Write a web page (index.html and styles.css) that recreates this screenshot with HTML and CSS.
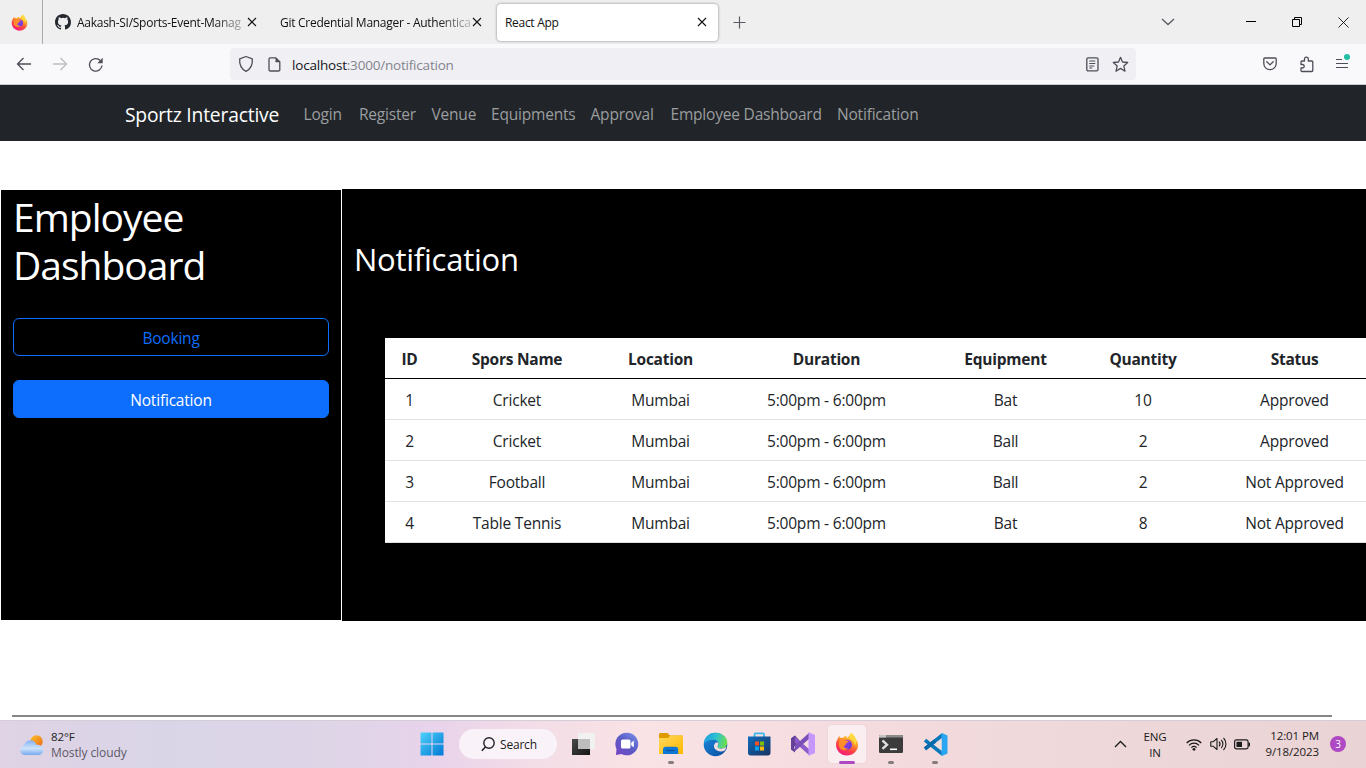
FILE: index.html
```html
<!DOCTYPE html>
<html lang="en">
<head>
<meta charset="utf-8">
<title>React App</title>
<link rel="stylesheet" href="styles.css">
</head>
<body>
<svg class="defs" width="0" height="0">
  <defs>
    <linearGradient id="ffA" x1="0.8" y1="0" x2="0.3" y2="1"><stop offset="0" stop-color="#fff44f"/><stop offset=".35" stop-color="#ffa628"/><stop offset=".65" stop-color="#ff4a3d"/><stop offset="1" stop-color="#f5157f"/></linearGradient>
    <linearGradient id="ffB" x1="0" y1="0" x2="1" y2="1"><stop offset="0" stop-color="#b33bd8"/><stop offset="1" stop-color="#5a3de0"/></linearGradient>
    <linearGradient id="win" x1="0" y1="0" x2="1" y2="1"><stop offset="0" stop-color="#4fd0fb"/><stop offset="1" stop-color="#0078d4"/></linearGradient>
    <linearGradient id="dark" x1="0" y1="0" x2="1" y2="1"><stop offset="0" stop-color="#4a4a4a"/><stop offset="1" stop-color="#151515"/></linearGradient>
    <linearGradient id="chat" x1="1" y1="0" x2="0.2" y2="1"><stop offset="0" stop-color="#7f94ee"/><stop offset=".5" stop-color="#5b5fc7"/><stop offset="1" stop-color="#7047c4"/></linearGradient>
    <linearGradient id="fold" x1="0" y1="0" x2="1" y2="1"><stop offset="0" stop-color="#ffd75e"/><stop offset="1" stop-color="#ffb900"/></linearGradient>
    <linearGradient id="edgeA" x1="0" y1="0.3" x2="1" y2="0.5"><stop offset="0" stop-color="#1b9de2"/><stop offset=".5" stop-color="#2fc2cf"/><stop offset="1" stop-color="#6be04c"/></linearGradient>
    <linearGradient id="edgeB" x1="0" y1="0" x2="1" y2="1"><stop offset="0" stop-color="#1b8de0"/><stop offset="1" stop-color="#0c4a9c"/></linearGradient>
    <linearGradient id="store" x1="0" y1="0" x2="1" y2="1"><stop offset="0" stop-color="#0f6cbd"/><stop offset="1" stop-color="#1b3360"/></linearGradient>
    <linearGradient id="sun" x1="0" y1="0" x2="1" y2="1"><stop offset="0" stop-color="#fbc02d"/><stop offset="1" stop-color="#ee6a14"/></linearGradient>
    <linearGradient id="cloud" x1="0" y1="0" x2="0" y2="1"><stop offset="0" stop-color="#82b1f3"/><stop offset=".55" stop-color="#cfe3fb"/><stop offset="1" stop-color="#76a9ef"/></linearGradient>
    <symbol id="firefox" viewBox="0 0 24 24">
      <path fill="url(#ffA)" d="M16 .8c2.100 1.500 3.200 3.200 3.700 5.300C22.200 8.300 23.300 11 23 14c-.5 5.300-5.200 9.500-11 9.500C6 23.500 1 19 1 12.800c0-2.500.8-4.600 2-6.300.1-.9.600-1.900 1.400-2.500l.6 2c1-.3 2.200-.3 3.200.1C9 4.800 10.200 4 11.500 3.600c-.2 1 0 2 .5 2.700 1.300-1.500 3-2.900 4-5.500z"/>
      <circle cx="12" cy="12.700" r="5" fill="url(#ffB)"/>
      <path fill="#ff8d2a" d="M4.500 8.500c2-2 4.300-1.700 6.300-.3 1 .7 2.200.6 3 .9-.2 1.500-2.300 1.700-2.700 2.300-.3 1.700-1.700 1.600-2.100 2.900-.3 2 2.600 2.500 4 1.800-1.700 3.200-7.100 3-8.600-.8-.8-2.200-.7-4.700.1-6.800z"/>
      <path fill="#ffd93f" d="M16 1c5 3.500 6.500 8 4.200 12.500-1-3.500-2.100-5.400-5.400-6.700C14.300 4.700 15.400 3.200 16 1z"/>
    </symbol>
    <symbol id="close" viewBox="0 0 10 10"><path d="M1 1l8 8M9 1l-8 8" stroke="currentColor" stroke-width="1.100" fill="none"/></symbol>
  </defs>
</svg>

<header class="tabs">
  <div class="pinned"><svg width="17" height="17"><use href="#firefox"/></svg></div>
  <div class="tab tab-github">
    <svg class="github" width="16" height="16" viewBox="0 0 16 16" fill="#24292f"><path d="M8 0C3.580 0 0 3.580 0 8c0 3.540 2.290 6.530 5.470 7.590.4.070.55-.17.55-.38v-1.490c-2.010.37-2.530-.49-2.690-.94-.09-.23-.48-.94-.82-1.130-.28-.15-.68-.52-.01-.53.63-.01 1.080.58 1.230.82.72 1.210 1.870.87 2.330.66.07-.52.28-.87.51-1.070-1.780-.2-3.640-.89-3.640-3.950 0-.87.31-1.590.82-2.150-.08-.2-.36-1.020.08-2.120 0 0 .67-.21 2.200.82a7.420 7.420 0 014 0c1.530-1.040 2.200-.82 2.200-.82.44 1.100.16 1.920.08 2.120.51.560.82 1.270.82 2.150 0 3.070-1.870 3.750-3.650 3.950.29.250.54.730.54 1.480v2.200c0 .21.150.46.550.38A8.010 8.010 0 0016 8c0-4.420-3.580-8-8-8z"/></svg>
    <span class="tab-title fade t1">Aakash-SI/Sports-Event-Manag</span>
    <svg width="10" height="10"><use href="#close"/></svg>
  </div>
  <div class="tab tab-git">
    <span class="tab-title fade t2">Git Credential Manager - Authentica</span>
    <svg width="10" height="10"><use href="#close"/></svg>
  </div>
  <div class="tab tab-active">
    <span class="tab-title t3">React App</span>
    <svg width="10" height="10"><use href="#close"/></svg>
  </div>
  <svg class="plus" width="13" height="13" viewBox="0 0 13 13"><path d="M6.500 .5v12M.5 6.500h12" stroke="#5b5b66" stroke-width="1.200"/></svg>
  <svg class="chev" width="14" height="8" viewBox="0 0 14 8"><path d="M1 1l6 5.500L13 1" stroke="#5b5b66" stroke-width="1.300" fill="none"/></svg>
  <svg class="wmin" width="10" height="10" viewBox="0 0 10 10"><path d="M0 4.500h10" stroke="#000"/></svg>
  <svg class="wmax" width="10" height="10" viewBox="0 0 10 10"><path d="M.5 2.500h7v7h-7zM2.500 2.500v-2h7v7h-2" stroke="#000" fill="none"/></svg>
  <svg class="wclose" width="11" height="11" viewBox="0 0 11 11"><path d="M.5 .5l10 10M10.500 .5l-10 10" stroke="#111" stroke-width=".9"/></svg>
</header>

<div class="toolbar">
  <svg class="back" width="16" height="14" viewBox="0 0 16 14"><path d="M7.500 1L1.500 7l6 6M1.500 7H15" stroke="#4d4d58" stroke-width="1.300" fill="none"/></svg>
  <svg class="fwd" width="16" height="14" viewBox="0 0 16 14"><path d="M8.500 1l6 6-6 6M14.500 7H1" stroke="#bdbdc3" stroke-width="1.300" fill="none"/></svg>
  <svg class="reload" width="16" height="16" viewBox="0 0 16 16"><path d="M14 8.500A6.300 6.300 0 1 1 12.300 3.500" stroke="#4d4d58" stroke-width="1.300" fill="none"/><path d="M14.700 .8v5.400H9.300z" fill="#4d4d58"/></svg>
  <div class="urlbar">
    <svg width="16" height="18" viewBox="0 0 16 18"><path d="M8 1.500l6.300 2.300c.5 6-1.400 10.200-6.300 12.500C3.100 14 1.200 9.800 1.700 3.800z" stroke="#4d4d58" stroke-width="1.300" stroke-linejoin="round" fill="none"/></svg>
    <svg class="page" width="13" height="15" viewBox="0 0 13 15"><path d="M2.200.8h5.600l4 4v7.900a1.200 1.200 0 0 1-1.200 1.300H2.200A1.200 1.200 0 0 1 1 12.700V2A1.200 1.200 0 0 1 2.200.8z" stroke="#4d4d58" stroke-width="1.300" fill="none"/><path d="M7.500.8v4.400H12z" fill="#4d4d58"/></svg>
    <span class="url"><b>localhost</b>:3000/notification</span>
    <svg class="reader" width="13" height="15" viewBox="0 0 13 15"><rect x=".8" y=".8" width="11.200" height="13" rx="1.300" stroke="#4d4d58" stroke-width="1.300" fill="none"/><path d="M3.300 4h6M3.300 6.500h6M3.300 9h5M3.300 11h3" stroke="#4d4d58"/></svg>
    <svg class="star" width="17" height="17" viewBox="0 0 17 17"><path d="M8.500 1.300l2 4.700 5.200.5-3.900 3.400 1.200 5.300-4.500-2.800L4 15.200l1.200-5.300-3.900-3.400L6.500 6z" stroke="#4d4d58" stroke-width="1.300" stroke-linejoin="round" fill="none"/></svg>
  </div>
  <svg class="pocket" width="14" height="14" viewBox="0 0 14 14"><path d="M1.800 1h10.400a1 1 0 0 1 1 1v4.500a6.200 6.200 0 0 1-12.400 0V2a1 1 0 0 1 1-1zM3.800 4.800L7 7.900l3.200-3.100" stroke="#4d4d58" stroke-width="1.300" stroke-linecap="round" stroke-linejoin="round" fill="none"/></svg>
  <svg class="ext" width="15" height="17" viewBox="0 0 15 17"><path d="M5.500 5V3a1.900 1.900 0 0 1 3.800 0v2h3.500c.6 0 1 .4 1 1v8.500c0 .6-.4 1-1 1H3c-.6 0-1-.4-1-1V12h1.500a1.700 1.700 0 0 0 0-3.500H2V5.900c0-.5.400-.9.900-.9z" stroke="#4d4d58" stroke-width="1.300" stroke-linejoin="round" fill="none"/></svg>
  <svg class="menu" width="15" height="17" viewBox="0 0 15 17"><path d="M1 6.500h6M1 10.500h12M1 14.500h12" stroke="#4d4d58" stroke-width="1.200"/><circle cx="12" cy="4" r="3" fill="#20bfa2"/></svg>
</div>

<nav class="navbar">
  <a class="brand">Sportz Interactive</a>
  <div class="links"><a>Login</a><a>Register</a><a>Venue</a><a>Equipments</a><a>Approval</a><a>Employee Dashboard</a><a>Notification</a></div>
</nav>

<main class="content">
  <aside class="sidebar">
    <h1>Employee<br>Dashboard</h1>
    <button class="btn outline">Booking</button>
    <button class="btn solid">Notification</button>
  </aside>
  <section class="panel">
    <h2>Notification</h2>
    <table>
      <colgroup><col class="c1"><col class="c2"><col class="c3"><col class="c4"><col class="c5"><col class="c6"><col class="c7"></colgroup>
      <thead><tr><th>ID</th><th>Spors Name</th><th>Location</th><th>Duration</th><th>Equipment</th><th>Quantity</th><th>Status</th></tr></thead>
      <tbody>
        <tr><td>1</td><td>Cricket</td><td>Mumbai</td><td class="time">5:00pm - 6:00pm</td><td>Bat</td><td>10</td><td>Approved</td></tr>
        <tr><td>2</td><td>Cricket</td><td>Mumbai</td><td class="time">5:00pm - 6:00pm</td><td>Ball</td><td>2</td><td>Approved</td></tr>
        <tr><td>3</td><td>Football</td><td>Mumbai</td><td class="time">5:00pm - 6:00pm</td><td>Ball</td><td>2</td><td>Not Approved</td></tr>
        <tr><td>4</td><td>Table Tennis</td><td>Mumbai</td><td class="time">5:00pm - 6:00pm</td><td>Bat</td><td>8</td><td>Not Approved</td></tr>
      </tbody>
    </table>
  </section>
</main>
<div class="rule-wrap"><div class="rule"></div></div>

<footer class="taskbar">
  <div class="weather">
    <svg width="26" height="22" viewBox="0 0 26 22"><circle cx="17.500" cy="7.500" r="6.200" fill="url(#sun)"/><path fill="url(#cloud)" d="M5.500 21a5 5 0 0 1-.3-9.800C6.200 8.200 8.600 6.300 11.400 6.300c3 0 5.300 1.800 6.200 4.600 3.800-.5 6.600 1.900 6.600 5 0 2.900-2.200 5.100-5.100 5.100z"/></svg>
    <div class="wtext"><span class="temp">82°F</span><span class="sky">Mostly cloudy</span></div>
  </div>
  <div class="apps">
    <div class="app start"><svg width="24" height="24" viewBox="0 0 24 24"><path fill="url(#win)" d="M.5.5h11v11H.5zM12.500.5h11v11h-11zM.5 12.500h11v11H.5zM12.500 12.500h11v11h-11z"/></svg></div>
    <div class="search"><svg width="14" height="15" viewBox="0 0 14 15"><circle cx="8" cy="6" r="5.200" stroke="#222" stroke-width="1.400" fill="none"/><path d="M4.500 10L.8 13.800" stroke="#222" stroke-width="1.600"/></svg><span>Search</span></div>
    <div class="app"><svg width="24" height="24" viewBox="0 0 24 24"><path fill="url(#dark)" d="M1 7h18v16H1z"/><path fill="#f1f1f1" d="M7 1h18v16H7z"/><path fill="#bdbdbd" d="M7 7h12v10H7z"/></svg></div>
    <div class="app"><svg width="24" height="24" viewBox="0 0 24 24"><path fill="url(#chat)" d="M12 .7a11.300 11.300 0 1 1-5.500 21.200L1 23l.5-6A11.300 11.300 0 0 1 12 .7z"/><rect x="6" y="7.500" width="9.500" height="9" rx="1.500" fill="#fff"/><path fill="#fff" d="M16.200 10.800l2.600-2.300v7l-2.600-2.300z"/></svg></div>
    <div class="app"><svg width="26" height="24" viewBox="0 0 26 24"><path fill="#e09b00" d="M1 2.500C1 1.700 1.600 1 2.500 1h7L12 3.500h12.500V12H1z"/><path fill="url(#fold)" d="M1 6h9l2.500-2.500H25v18.500H1z"/><path fill="#0f78d4" d="M5 22v-4.500c0-1.800 1-2.700 2.700-2.700h9.800c1.700 0 2.700.9 2.700 2.700V22z"/><path d="M8.500 18.500h8" stroke="#0a529a" stroke-width="1.200"/></svg><i class="dot"></i></div>
    <div class="app"><svg width="25" height="25" viewBox="0 0 24 24"><circle cx="12" cy="12" r="11.300" fill="url(#edgeB)"/><path fill="url(#edgeA)" d="M.8 11C1.500 5 6 .7 12 .7c6.500 0 11.300 4.300 11.300 9.300 0 3.700-3 5.800-6 5.800-2 0-3.500-.7-3.500-1.700 0-.6 1.100-1 1.100-2.600 0-2.100-2-4-5-4C5.800 7.500 2.500 9.500.8 11z"/><path fill="#f4dde0" d="M14.500 10c.7 1.800-.5 3-.6 4 0 1.100 1.800 2.300 4.200 1.900 2-.3 3.600-1.200 4.500-2.300-.4 1.400-.8 2.700-1.500 3.900-2.700 1.700-6.600 1.500-9-.7-2.200-2-2-5.300.3-6.800z"/></svg></div>
    <div class="app"><svg width="24" height="24" viewBox="0 0 24 24"><path d="M7.500 5V2.400c0-.6.4-1 1-1h7.500c.6 0 1 .4 1 1V5" stroke="#38b6ed" stroke-width="1.800" fill="none"/><path fill="url(#store)" d="M1 4.500h22.500V21c0 1.500-1 2.500-2.500 2.500H3.500C2 23.500 1 22.500 1 21z"/><path fill="#f35325" d="M8 9.500h4v4H8z"/><path fill="#81bc06" d="M13 9.500h4v4h-4z"/><path fill="#05a6f0" d="M8 14.500h4v4H8z"/><path fill="#ffba08" d="M13 14.500h4v4h-4z"/></svg></div>
    <div class="app"><svg width="26" height="26" viewBox="0 0 26 26"><path fill="#644098" d="M1 7.500l4-3 5 5.500-6 6V20l-3-2z"/><path fill="#8d5bca" d="M4 5l15.500 13.500v6L5 11.500z"/><path fill="#7a4fb8" d="M4 21l15.500-13.500v-6L5 14.500z"/><path fill="#644098" d="M1 7.500l4-3v2.800L3.800 9v8L5 18.700v2.800l-4-3z"/><path fill="#c596fb" d="M18.500 1.300L25 4v18l-6.500 2.700z"/></svg></div>
    <div class="app current"><svg width="24" height="24"><use href="#firefox"/></svg><i class="dot active"></i></div>
    <div class="app"><svg width="24" height="20" viewBox="0 0 24 20"><rect y="1" width="24" height="18" rx="1.200" fill="#3b3b3b"/><path fill="#8a8a8a" d="M0 3.500V2a1 1 0 0 1 1-1h22a1 1 0 0 1 1 1v1.500z"/><path fill="#c4c4c4" d="M0 3.500V2a1 1 0 0 1 1-1h6v2.500z"/><path d="M3.500 6.500L8 10.700l-4.500 4.200" stroke="#ddd" stroke-width="2.400" fill="none"/><path d="M11 15.300h7" stroke="#fff" stroke-width="1.600"/></svg><i class="dot"></i></div>
    <div class="app"><svg width="25" height="25" viewBox="0 0 25 25"><path d="M2 8.200L19.500 22M2 16.800L19.500 3" stroke="#0877b9" stroke-width="3.600"/><path d="M2 16.800L12 9" stroke="#0669a8" stroke-width="3.600"/><path fill="#2aa6f2" d="M18.500.8L24.500 3.500v18l-6 2.700z"/><path fill="#f0dddd" d="M18.500 7.500v10L12 12.500z"/></svg><i class="dot"></i></div>
  </div>
  <div class="tray">
    <svg class="up" width="13" height="8" viewBox="0 0 13 8"><path d="M1 7l5.500-5.500L12 7" stroke="#1b1b1b" stroke-width="1.300" fill="none"/></svg>
    <div class="lang"><span>ENG</span><span>IN</span></div>
    <svg class="wifi" width="16" height="13" viewBox="0 0 16 13"><g stroke="#1b1b1b" stroke-width="1.200" fill="none"><path d="M.7 5A10.300 10.300 0 0 1 15.300 5M3 7.300a7 7 0 0 1 10 0M5.300 9.600a3.900 3.900 0 0 1 5.400 0"/></g><circle cx="8" cy="11.300" r="1.400" fill="#1b1b1b"/></svg>
    <svg class="vol" width="17" height="14" viewBox="0 0 17 14"><g stroke="#1b1b1b" stroke-width="1.100" fill="none" stroke-linejoin="round"><path d="M.8 4.700h2.500L7 1.500v11L3.300 9.300H.8zM9 4.700a3.300 3.300 0 0 1 0 4.600M11.200 2.900a5.800 5.800 0 0 1 0 8.200M13.500 1a8.500 8.500 0 0 1 0 12"/></g></svg>
    <svg class="batt" width="17" height="11" viewBox="0 0 17 11"><rect x=".6" y=".9" width="13.500" height="9" rx="1.800" stroke="#1b1b1b" stroke-width="1.200" fill="none"/><path fill="#1b1b1b" d="M2.500 2.800H8V8H2.500zM14.500 3.700H16v3.500h-1.500z"/></svg>
    <div class="clock"><span class="hour">12:01 PM</span><span class="date">9/18/2023</span></div>
    <div class="badge">3</div>
  </div>
</footer>
</body>
</html>
```
FILE: styles.css
```css
* { box-sizing: border-box; }
body { margin: 0; width: 1366px; height: 768px; overflow: hidden; background: #fff; display: flex; flex-direction: column; font-family: "Open Sans", "Noto Sans", sans-serif; font-size: 15.500px; letter-spacing: -.2px; color: #212529; }
svg { display: block; flex: none; }
.defs { position: absolute; }

.tabs { flex: none; height: 44px; background: #efefef; display: flex; align-items: center; color: #111; font-size: 12px; white-space: nowrap; }
.pinned { width: 43px; height: 44px; border-right: 1px solid #acacac; padding: 14px 0 0 11px; flex: none; }
.tab { display: flex; align-items: center; justify-content: space-between; flex: none; }
.tab-github { width: 214px; padding-left: 12px; }
.tab-git { width: 225px; padding-left: 23px; }
.tab-active { margin-left: 15px; width: 221px; height: 37px; background: #fff; border-radius: 4px; box-shadow: 0 0 3px rgba(0,0,0,.45); padding: 0 11px 0 8px; }
.tab-title { line-height: 18px; overflow: hidden; padding-top: 1px; }
.t1 { width: 167px; letter-spacing: -.27px; }
.t2 { width: 191px; letter-spacing: -.27px; }
.t3 { letter-spacing: -.3px; }
.fade { -webkit-mask-image: linear-gradient(90deg, #000 82%, transparent 105%); mask-image: linear-gradient(90deg, #000 82%, transparent 105%); }
.tab-github .tab-title { margin-left: 6px; margin-right: auto; }
.plus { margin-left: 15px; }
.chev { margin-left: 415px; }
.wmin { margin-left: 71px; }
.wmax { margin-left: 36px; }
.wclose { margin-left: 36px; }

.toolbar { flex: none; height: 41px; background: #f9f9fb; border-bottom: 1px solid #ccc; display: flex; align-items: center; }
.back { margin-left: 16px; }
.fwd { margin-left: 20px; }
.reload { margin-left: 20px; margin-top: 1px; }
.urlbar { margin-left: 126px; width: 906px; height: 32px; border-radius: 4px; background: #f0f0f4; display: flex; align-items: center; padding-left: 8px; }
.page { margin-left: 14px; }
.url { margin-left: 11px; font-size: 13.500px; color: #83838c; letter-spacing: -.2px; padding-top: 2px; }
.url b { font-weight: 400; color: #15141a; }
.reader { margin-left: auto; }
.star { margin: 0 7.500px 0 13px; }
.pocket { margin-left: 127px; }
.ext { margin-left: 22px; }
.menu { margin-left: 21px; margin-top: -5px; }

.navbar { flex: none; height: 56px; background: #212529; display: flex; align-items: center; padding-left: 125px; color: #9b9d9f; white-space: nowrap; }
.brand { width: 178.500px; color: #fff; font-size: 19.300px; padding-top: 3px; }
.links { display: grid; grid-template-columns: 55.500px 72.500px 59.500px 99.500px 80px 166.500px 83px; padding-top: 2px; }

.content { flex: none; margin-top: 48px; height: 432px; display: flex; }
.sidebar { flex: none; width: 340px; height: 430px; margin: 1px 1px 0; background: #000; color: #fff; padding: 3px 12px; }
h1 { margin: 0 0 29px; font-size: 39px; line-height: 48px; font-weight: 400; letter-spacing: -1px; }
.btn { display: block; width: 316px; height: 38px; border: 1px solid #0d6efd; border-radius: 6px; font: inherit; letter-spacing: inherit; line-height: 22px; padding: 2px 0 0; margin-bottom: 24px; }
.outline { background: transparent; color: #0d6efd; }
.solid { background: #0d6efd; color: #fff; }
.panel { flex: 1; min-width: 0; background: #000; overflow: hidden; padding: 51px 0 0 12px; }
h2 { margin: 0; color: #fff; font-size: 31px; line-height: 38px; font-weight: 400; letter-spacing: -.25px; }
table { margin: 60px 0 0 31px; width: 997px; table-layout: fixed; border-collapse: separate; border-spacing: 0; background: #fff; text-align: center; }
.c1 { width: 49px; } .c2 { width: 166px; } .c3 { width: 121px; } .c4 { width: 211px; } .c5 { width: 147px; } .c6 { width: 128px; } .c7 { width: 175px; }
th, td { height: 41px; padding: 1px 0 0; line-height: 22px; border-bottom: 1px solid #dee2e6; white-space: nowrap; }
th { border-bottom-color: #000; font-weight: 700; letter-spacing: -.25px; }

.rule-wrap { flex: 1; display: flex; align-items: flex-end; padding: 0 34px 3px 12px; }
.rule { flex: 1; height: 2px; background: #858787; }

.taskbar { flex: none; height: 48px; border-top: 1px solid #d5cdd8; background: linear-gradient(90deg, #dfd3e5 0, #d9d5e7 12%, #ded5e7 24%, #e8d3eb 32%, #f3dde7 39%, #f9e3e5 47%, #f5dce0 60%, #f0d9da 75%, #ead3d5 100%); display: flex; align-items: center; color: #1b1b1b; font-size: 11.500px; letter-spacing: -.1px; }
.weather { width: 410px; display: flex; padding-left: 19px; align-items: center; }
.wtext { margin-left: 6px; display: flex; flex-direction: column; line-height: 16px; }
.sky { color: #5d5967; font-size: 12px; }
.apps { display: flex; height: 47px; align-items: center; padding-bottom: 1px; }
.app { width: 44px; height: 40px; display: flex; align-items: center; justify-content: center; position: relative; }
.start { width: 44px; }
.search { width: 98px; height: 30px; margin: 0 4px 0 5px; border-radius: 15px; background: #f9f3f9; display: flex; align-items: center; padding-left: 22px; gap: 5px; font-size: 12px; letter-spacing: -.2px; }
.current::before { content: ""; position: absolute; left: 3px; top: 1px; width: 38px; height: 38px; border-radius: 4px; background: #faeef0; box-shadow: 0 0 1px #cbb; }
.current svg { position: relative; }
.dot { position: absolute; bottom: 0; left: 19px; width: 6px; height: 3px; border-radius: 2px; background: #857b7d; }
.dot.active { left: 14px; width: 16px; background: #ae49c3; }
.tray { margin-left: auto; display: flex; align-items: center; height: 47px; padding: 0 20px 1px 0; }
.lang { width: 30px; margin-left: 13px; display: flex; flex-direction: column; align-items: center; line-height: 16px; padding-top: 1px; }
.wifi { margin-left: 16px; }
.vol { margin-left: 8px; }
.batt { margin-left: 7px; }
.clock { width: 60px; margin-left: 8px; display: flex; flex-direction: column; align-items: flex-end; line-height: 16px; white-space: nowrap; }
.badge { margin-left: 11px; width: 16px; height: 16px; border-radius: 50%; background: #ae49c3; color: #fff; font-size: 10px; line-height: 16px; text-align: center; }
```
